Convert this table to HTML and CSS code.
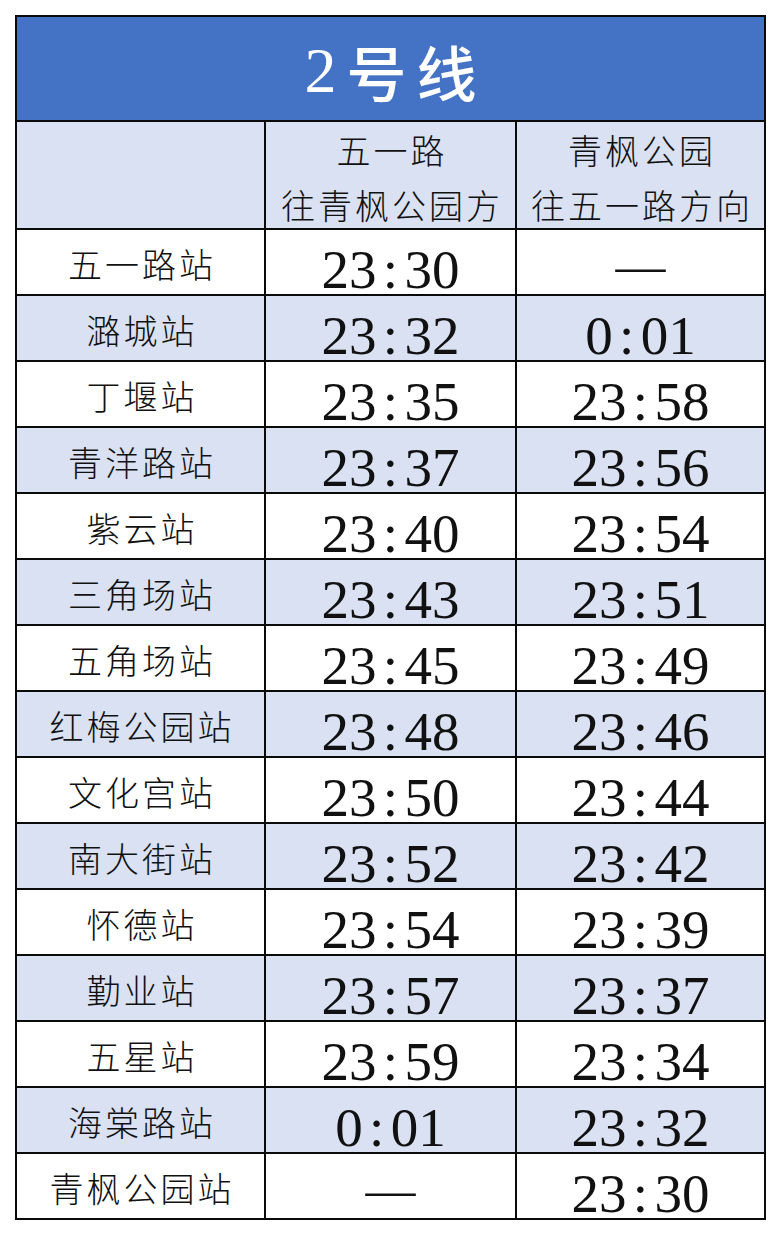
FILE: index.html
```html
<!DOCTYPE html>
<html lang="zh-CN">
<head>
<meta charset="utf-8">
<title>2号线</title>
<link rel="stylesheet" href="styles.css">
</head>
<body>
<div class="sheet">
  <div class="title"><span class="title-num">2</span>号线</div>

  <div class="cell head"></div>
  <div class="cell head dir"><span>五一路</span><span>往青枫公园方</span></div>
  <div class="cell head dir"><span>青枫公园</span><span>往五一路方向</span></div>

  <div class="cell name">五一路站</div>
  <div class="cell time">23<span class="colon">:</span>30</div>
  <div class="cell time none"><span class="dash">—</span></div>

  <div class="cell name alt">潞城站</div>
  <div class="cell time alt">23<span class="colon">:</span>32</div>
  <div class="cell time alt">0<span class="colon">:</span>01</div>

  <div class="cell name">丁堰站</div>
  <div class="cell time">23<span class="colon">:</span>35</div>
  <div class="cell time">23<span class="colon">:</span>58</div>

  <div class="cell name alt">青洋路站</div>
  <div class="cell time alt">23<span class="colon">:</span>37</div>
  <div class="cell time alt">23<span class="colon">:</span>56</div>

  <div class="cell name">紫云站</div>
  <div class="cell time">23<span class="colon">:</span>40</div>
  <div class="cell time">23<span class="colon">:</span>54</div>

  <div class="cell name alt">三角场站</div>
  <div class="cell time alt">23<span class="colon">:</span>43</div>
  <div class="cell time alt">23<span class="colon">:</span>51</div>

  <div class="cell name">五角场站</div>
  <div class="cell time">23<span class="colon">:</span>45</div>
  <div class="cell time">23<span class="colon">:</span>49</div>

  <div class="cell name alt">红梅公园站</div>
  <div class="cell time alt">23<span class="colon">:</span>48</div>
  <div class="cell time alt">23<span class="colon">:</span>46</div>

  <div class="cell name">文化宫站</div>
  <div class="cell time">23<span class="colon">:</span>50</div>
  <div class="cell time">23<span class="colon">:</span>44</div>

  <div class="cell name alt">南大街站</div>
  <div class="cell time alt">23<span class="colon">:</span>52</div>
  <div class="cell time alt">23<span class="colon">:</span>42</div>

  <div class="cell name">怀德站</div>
  <div class="cell time">23<span class="colon">:</span>54</div>
  <div class="cell time">23<span class="colon">:</span>39</div>

  <div class="cell name alt">勤业站</div>
  <div class="cell time alt">23<span class="colon">:</span>57</div>
  <div class="cell time alt">23<span class="colon">:</span>37</div>

  <div class="cell name">五星站</div>
  <div class="cell time">23<span class="colon">:</span>59</div>
  <div class="cell time">23<span class="colon">:</span>34</div>

  <div class="cell name alt">海棠路站</div>
  <div class="cell time alt">0<span class="colon">:</span>01</div>
  <div class="cell time alt">23<span class="colon">:</span>32</div>

  <div class="cell name">青枫公园站</div>
  <div class="cell time none"><span class="dash">—</span></div>
  <div class="cell time">23<span class="colon">:</span>30</div>
</div>
</body>
</html>
```

FILE: styles.css
```css
html, body {
  margin: 0;
  padding: 0;
  background: #ffffff;
}

.sheet {
  margin: 15px 0 0 15px;
  width: 751px;
  box-sizing: border-box;
  display: grid;
  grid-template-columns: 247px 249px 247px;
  grid-template-rows: 103px 106px repeat(15, 64px);
  gap: 2px;
  padding: 2px;
  background: #0a0a0a;
}

.title {
  grid-column: 1 / -1;
  background: #4472c4;
  color: #ffffff;
  display: flex;
  align-items: center;
  justify-content: center;
  font-family: "Noto Sans CJK SC", sans-serif;
  font-size: 60px;
  font-weight: 500;
  letter-spacing: 10px;
  padding-left: 10px;
  padding-top: 4px;
  box-sizing: border-box;
}

.title-num {
  font-family: "Liberation Serif", serif;
  font-size: 64px;
  font-weight: 400;
}

.cell {
  background: #ffffff;
  display: flex;
  align-items: center;
  justify-content: center;
  color: #111111;
  box-sizing: border-box;
}

.alt,
.head {
  background: #d9e1f2;
}

.dir {
  flex-direction: column;
  font-family: "Noto Sans CJK SC", sans-serif;
  font-weight: 300;
  font-size: 34px;
  line-height: 55px;
  letter-spacing: 3px;
  padding-left: 3px;
  padding-top: 4px;
}

.name {
  font-family: "Noto Sans CJK SC", sans-serif;
  font-weight: 300;
  font-size: 34px;
  letter-spacing: 3px;
  padding-left: 3px;
  padding-top: 3px;
}

.time {
  font-family: "Liberation Serif", serif;
  font-size: 55px;
  padding-top: 14px;
}

.time.none {
  padding-top: 8px;
}

.colon {
  display: inline-block;
  width: 28px;
  text-align: center;
}

.dash {
  font-family: "Liberation Serif", serif;
  font-size: 50px;
  line-height: 1;
}
```
